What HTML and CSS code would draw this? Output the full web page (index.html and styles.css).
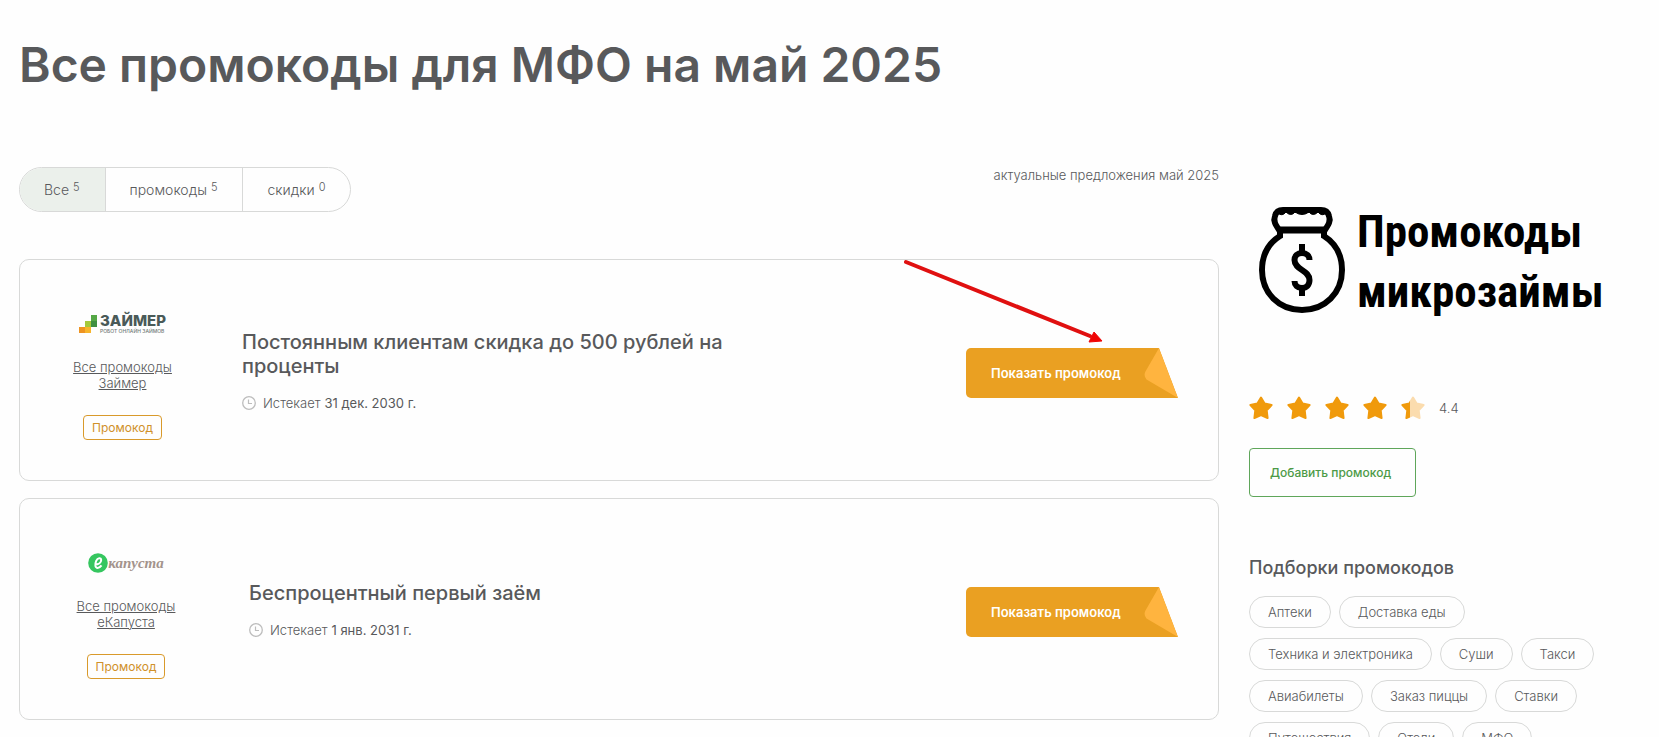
FILE: index.html
```html
<!DOCTYPE html>
<html lang="ru">
<head>
  <meta charset="UTF-8" />
  <meta name="viewport" content="width=device-width, initial-scale=1.0" />
  <title>Все промокоды для МФО на май 2025</title>
  <link rel="stylesheet" href="styles.css">
</head>
<body>
  <!-- shared icons -->
  <svg class="sprite" aria-hidden="true">
    <symbol id="clock" viewBox="0 0 14 14">
      <circle cx="7" cy="7" r="6.3" fill="none" stroke="#bdbdbd" stroke-width="1.3"/>
      <path d="M6.5 3.5v4h3.5" fill="none" stroke="#bdbdbd" stroke-width="1.2"/>
    </symbol>
    <symbol id="star" viewBox="0 0 24 24">
      <path d="M12 1.500l3.600 6.100 7 1.500-4.900 5.200.9 7.700-6.600-2.900-6.600 2.900.9-7.700L1.400 9.100l7-1.500z" stroke-width="2" stroke-linejoin="round"/>
    </symbol>
    <symbol id="fold" viewBox="0 0 34 50">
      <path d="M15 0L1.200 24Q-.5 28 2.500 31.500L34 50z" fill="#ffb43f"/>
    </symbol>
  </svg>

  <h1>Все промокоды для МФО на май 2025</h1>

  <div class="layout">
    <main>
      <div class="toolbar">
        <div class="tabs">
          <button type="button" class="tab active">Все <sup>5</sup></button>
          <button type="button" class="tab">промокоды <sup>5</sup></button>
          <button type="button" class="tab">скидки <sup>0</sup></button>
        </div>
        <p class="actual">актуальные предложения май 2025</p>
      </div>

      <article class="offer offer-long">
        <div class="brand">
          <div class="brand-logo zaymer">
            <svg width="18" height="18" viewBox="0 0 18 18">
              <path d="M12 0h6v6h-6z" fill="#55a846"/>
              <path d="M12 6h6v6h-6z" fill="#3f8f43"/>
              <path d="M6 6h6v6H6z" fill="#a5c93c"/>
              <path d="M6 12h6v6H6z" fill="#f7b52c"/>
              <path d="M0 12h6v6H0z" fill="#ee9422"/>
            </svg>
            <div>
              <div class="zaymer-name">ЗАЙМЕР</div>
              <div class="zaymer-slogan">РОБОТ ОНЛАЙН ЗАЙМОВ</div>
            </div>
          </div>
          <a class="brand-link" href="#">Все промокоды Займер</a>
          <span class="badge">Промокод</span>
        </div>
        <div class="offer-body">
          <h2>Постоянным клиентам скидка до 500 рублей на проценты</h2>
          <p class="expires"><svg width="14" height="14"><use href="#clock"/></svg>Истекает <b>31 дек. 2030 г.</b></p>
        </div>
        <button type="button" class="show-code">Показать промокод<svg class="fold" width="34" height="50"><use href="#fold"/></svg></button>
        <svg class="arrow" width="200" height="86" viewBox="0 0 200 86">
          <path d="M3 3l184 74" fill="none" stroke="#e01010" stroke-width="4" stroke-linecap="round"/>
          <path d="M191 73l8 9-13 1z" fill="#f00505" stroke="#f00505"/>
        </svg>
      </article>

      <article class="offer">
        <div class="brand">
          <div class="brand-logo kapusta">
            <svg width="20" height="20" viewBox="0 0 20 20">
              <circle cx="10" cy="10" r="9.800" fill="#35c65f"/>
              <path d="M6.800 11.500c4 0 6.400-2.200 6.400-4.500 0-2.600-3.600-2.200-5 .9-1.700 3.900-.9 7 1.400 7 1.900 0 3-1.200 3.900-2.500" fill="none" stroke="#fff" stroke-width="2"/>
            </svg>
            <span>капуста</span>
          </div>
          <a class="brand-link" href="#">Все промокоды еКапуста</a>
          <span class="badge">Промокод</span>
        </div>
        <div class="offer-body">
          <h2>Беспроцентный первый заём</h2>
          <p class="expires"><svg width="14" height="14"><use href="#clock"/></svg>Истекает <b>1 янв. 2031 г.</b></p>
        </div>
        <button type="button" class="show-code">Показать промокод<svg class="fold" width="34" height="50"><use href="#fold"/></svg></button>
      </article>
    </main>

    <aside>
      <div class="promo-logo">
        <svg width="86" height="106" viewBox="0 0 86 106" fill="none" stroke="#000" stroke-width="6">
          <path d="M22 26C16 17 14 14 16 9c1-4 4-6 8-6h38c4 0 7 2 8 6 2 5 0 8-6 17"/>
          <path d="M18 5h50l-1 1q-4 4-8-1-5 5-9 0-7 5-14 0-4 5-9 0-4 5-8 1z" fill="#000" stroke-width="1"/>
          <path d="M20 23h46" stroke-width="7"/>
          <path d="M21 22v7C10 36 3 47 3 63c0 23 17 40 40 40s40-17 40-40c0-16-7-27-18-34v-7"/>
          <path d="M43 37v9M43 81v8"/>
          <path d="M50.500 53c0-4-3-7-7.500-7s-7.500 3-7.500 7c0 10 15 10 15 20 0 5-3 8-7.500 8s-7.500-3-7.500-7"/>
        </svg>
        <div class="promo-name">Промокоды<br>микрозаймы</div>
      </div>

      <div class="rating">
        <svg width="24" height="24" fill="#f09a0c" stroke="#f09a0c"><use href="#star"/></svg>
        <svg width="24" height="24" fill="#f09a0c" stroke="#f09a0c"><use href="#star"/></svg>
        <svg width="24" height="24" fill="#f09a0c" stroke="#f09a0c"><use href="#star"/></svg>
        <svg width="24" height="24" fill="#f09a0c" stroke="#f09a0c"><use href="#star"/></svg>
        <svg width="24" height="24">
          <defs>
            <linearGradient id="part">
              <stop offset=".36" stop-color="#f09a0c"/>
              <stop offset=".36" stop-color="#fbdcae"/>
            </linearGradient>
          </defs>
          <use href="#star" fill="url(#part)" stroke="url(#part)"/>
        </svg>
        <span>4.4</span>
      </div>

      <button type="button" class="add-code">Добавить промокод</button>

      <h3>Подборки промокодов</h3>
      <nav class="chips">
        <a href="#">Аптеки</a>
        <a href="#">Доставка еды</a>
        <a href="#">Техника и электроника</a>
        <a href="#">Суши</a>
        <a href="#">Такси</a>
        <a href="#">Авиабилеты</a>
        <a href="#">Заказ пиццы</a>
        <a href="#">Ставки</a>
        <a href="#">Путешествия</a>
        <a href="#">Отели</a>
        <a href="#">МФО</a>
      </nav>
    </aside>
  </div>
</body>
</html>
```

FILE: styles.css
```css
* {
  box-sizing: border-box;
}

body {
  margin: 0;
  padding: 35px 19px 18px;
  font-family: Inter, "Liberation Sans", sans-serif;
  font-size: 13px;
  font-weight: 300;
  line-height: 16px;
  color: #58595b;
  background: #fefefe;
}

h1, h2, h3, p {
  margin: 0;
}

button {
  font-family: inherit;
  cursor: pointer;
}

.sprite {
  position: absolute;
  width: 0;
  height: 0;
}

h1 {
  font-size: 48px;
  font-weight: 600;
  line-height: 60px;
}

.layout {
  display: grid;
  grid-template-columns: minmax(0, 1fr) 391px;
  gap: 30px;
  margin-top: 72px;
}

/* filter tabs */
.toolbar {
  display: flex;
  justify-content: space-between;
  align-items: flex-start;
  margin-bottom: 47px;
}

.tabs {
  display: flex;
  height: 45px;
  border: 1px solid #d8d9d8;
  border-radius: 23px;
  overflow: hidden;
}

.tab {
  padding: 0 25px 0 24px;
  border: 0;
  border-right: 1px solid #d8d9d8;
  background: none;
  font-size: 14px;
  font-weight: 300;
  color: #58595b;
}

.tab:last-child {
  border-right: 0;
}

.tab.active {
  background: #ebf0eb;
}

.tab sup {
  font-size: 11px;
  line-height: 0;
  vertical-align: 4px;
}

/* offers */
.offer {
  position: relative;
  display: flex;
  align-items: center;
  height: 222px;
  margin-bottom: 17px;
  padding-right: 40px;
  border: 1px solid #d8d9d8;
  border-radius: 10px;
}

.brand {
  display: flex;
  flex-direction: column;
  align-items: center;
  width: 212px;
  margin-right: 17px;
}

.offer-long .brand {
  width: 205px;
}

.brand-logo {
  display: flex;
  align-items: center;
  justify-content: center;
  height: 48px;
  margin-bottom: 11px;
}

.zaymer {
  gap: 3px;
}

.zaymer-name {
  font-size: 15px;
  font-weight: 800;
  line-height: 14px;
  color: #4a5a58;
}

.zaymer-slogan {
  font-size: 5px;
  font-weight: 500;
  line-height: 6px;
  color: #707a78;
}

.kapusta span {
  font-family: "Liberation Serif", serif;
  font-size: 15px;
  font-style: italic;
  font-weight: bold;
  color: #a3938c;
}

.brand-link {
  width: 110px;
  text-align: center;
  color: inherit;
}

.badge {
  margin-top: 24px;
  padding: 0 8px;
  border: 1px solid #d99a2b;
  border-radius: 4px;
  font-size: 12px;
  font-weight: 400;
  line-height: 23px;
  color: #d0912a;
}

.offer-body {
  width: 500px;
}

h2 {
  font-size: 20px;
  font-weight: 500;
  line-height: 24px;
}

.expires {
  display: flex;
  align-items: center;
  gap: 7px;
  margin-top: 17px;
}

.expires b {
  margin-left: -3px;
  font-weight: 400;
}

.show-code {
  position: relative;
  width: 212px;
  height: 50px;
  margin-top: 6px;
  margin-left: auto;
  padding: 0 25px;
  border: 0;
  border-radius: 5px 0 0 5px;
  background: #eaa022;
  clip-path: polygon(0 0, 193px 0, 100% 100%, 0 100%);
  text-align: left;
  font-size: 13px;
  font-weight: 600;
  color: #fff;
}

.fold {
  position: absolute;
  top: 0;
  right: 0;
}

.arrow {
  position: absolute;
  top: -1px;
  right: 115px;
}

/* sidebar */
.promo-logo {
  display: flex;
  gap: 12px;
  height: 146px;
  padding: 40px 0 0 10px;
}

.promo-logo svg {
  flex: none;
}

.promo-name {
  font-family: "Liberation Sans Narrow", "Roboto Condensed", "Open Sans Condensed", Roboto, sans-serif;
  font-size: 45px;
  font-weight: 700;
  line-height: 60px;
  margin-top: -5px;
  color: #000;
}

.rating {
  display: flex;
  align-items: center;
  gap: 14px;
  margin-top: 83px;
}

.add-code {
  display: block;
  margin-top: 28px;
  padding: 0 24px 0 20px;
  border: 1px solid #5fa65a;
  border-radius: 4px;
  background: none;
  font-size: 12px;
  font-weight: 500;
  line-height: 47px;
  color: #4c9a46;
}

h3 {
  margin-top: 60px;
  font-size: 18px;
  font-weight: 500;
  line-height: 22px;
}

.chips {
  display: flex;
  flex-wrap: wrap;
  gap: 10px 8px;
  margin-top: 17px;
}

.chips a {
  padding: 0 18px;
  border: 1px solid #d8d9d8;
  border-radius: 16px;
  line-height: 30px;
  color: inherit;
  text-decoration: none;
}
```
